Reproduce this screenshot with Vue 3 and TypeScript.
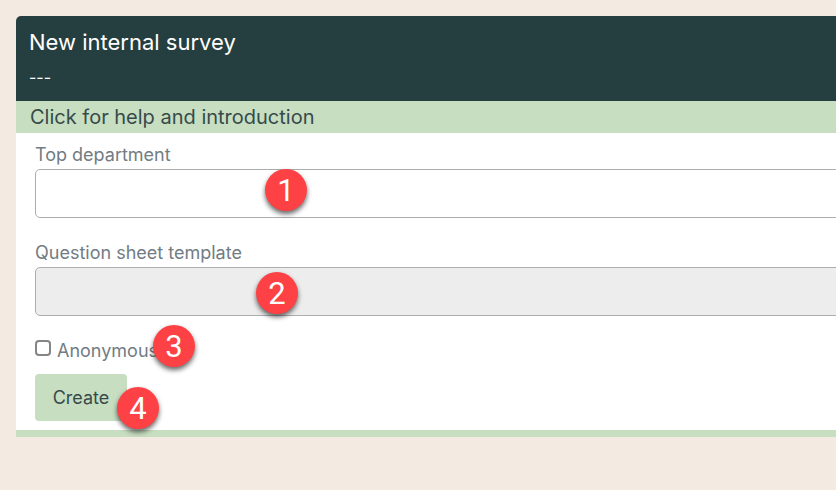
<script setup lang="ts">
import { ref } from 'vue'

const department = ref('')
const template = ref('')
const anonymous = ref(false)
const helpOpen = ref(false)
</script>

<template>
  <main class="page">
    <section class="card">
      <header class="header">
        <h1 class="title">New internal survey</h1>
        <p class="subtitle">---</p>
      </header>
      <button class="help" type="button" :aria-expanded="helpOpen" @click="helpOpen = !helpOpen">
        Click for help and introduction
      </button>
      <form class="form" @submit.prevent>
        <div class="field">
          <label for="department">Top department</label>
          <div class="control">
            <input id="department" v-model="department" class="text-input" type="text" />
            <span class="marker marker-department">1</span>
          </div>
        </div>
        <div class="field">
          <label for="template">Question sheet template</label>
          <div class="control">
            <input id="template" v-model="template" class="text-input" type="text" disabled />
            <span class="marker marker-template">2</span>
          </div>
        </div>
        <div class="check">
          <input id="anonymous" v-model="anonymous" class="checkbox" type="checkbox" />
          <label for="anonymous">Anonymous</label>
          <span class="marker marker-anonymous">3</span>
        </div>
        <div class="actions">
          <button class="create" type="submit">Create</button>
          <span class="marker marker-create">4</span>
        </div>
      </form>
    </section>
  </main>
</template>

<style>
body {
  background: #f3ebe1;
}
</style>

<style scoped>
.page {
  box-sizing: border-box;
  min-height: 100vh;
  padding: 16px 0 16px 16px;
  overflow: hidden;
  background: #f3ebe1;
  font-family: Inter, "Liberation Sans", sans-serif;
}

.card {
  margin-right: -32px;
  border-bottom: 7px solid #c7dec1;
  border-radius: 5px 5px 0 0;
  background: #fff;
}

.header {
  padding: 10px 13px 12px;
  border-radius: 5px 5px 0 0;
  background: #253e40;
  color: #fff;
}

.title {
  margin: 0;
  font-size: 22px;
  font-weight: 400;
  line-height: 32px;
}

.subtitle {
  margin: 7px 0 0;
  font-size: 16px;
  line-height: 24px;
}

.help {
  display: block;
  width: 100%;
  padding: 0 14px;
  border: 0;
  background: #c7dec1;
  color: #364a4b;
  font: inherit;
  font-size: 20px;
  line-height: 32px;
  text-align: left;
  cursor: pointer;
}

.form {
  padding: 10px 20px 9px 19px;
}

.field {
  margin-bottom: 23px;
}

.field label,
.check label {
  display: block;
  color: #727c83;
  font-size: 18px;
  line-height: 24px;
}

.control {
  position: relative;
  margin-top: 2px;
}

.text-input {
  display: block;
  box-sizing: border-box;
  width: 100%;
  height: 49px;
  padding: 8px 12px;
  border: 1px solid #adadad;
  border-radius: 5px;
  background: #fff;
  font: inherit;
  font-size: 18px;
}

.text-input:disabled {
  background: #ededed;
}

.check {
  position: relative;
  display: flex;
  align-items: center;
  gap: 6px;
}

.checkbox {
  appearance: none;
  box-sizing: border-box;
  width: 16px;
  height: 16px;
  margin: 0 0 6px;
  border: 2px solid #858585;
  border-radius: 4px;
  background: #fff;
}

.checkbox:checked {
  background: #253e40;
}

.actions {
  position: relative;
  margin-top: 11px;
}

.create {
  display: block;
  min-width: 92px;
  padding: 0 17px;
  border: 0;
  border-radius: 4px;
  background: #c7dec1;
  color: #364a4b;
  font: inherit;
  font-size: 18px;
  line-height: 47px;
  cursor: pointer;
}

.marker {
  position: absolute;
  z-index: 1;
  width: 42px;
  height: 42px;
  border-radius: 50%;
  background: #fd4144;
  box-shadow: 0 3px 5px rgba(0, 0, 0, 0.6);
  color: #fff;
  font-family: Roboto, "Liberation Sans", sans-serif;
  font-size: 31px;
  line-height: 43px;
  text-align: center;
}

.marker-department {
  top: 0;
  left: 230px;
}

.marker-template {
  top: 5px;
  left: 221px;
}

.marker-anonymous {
  top: -14px;
  left: 118px;
}

.marker-create {
  top: 13px;
  left: 82px;
}
</style>
